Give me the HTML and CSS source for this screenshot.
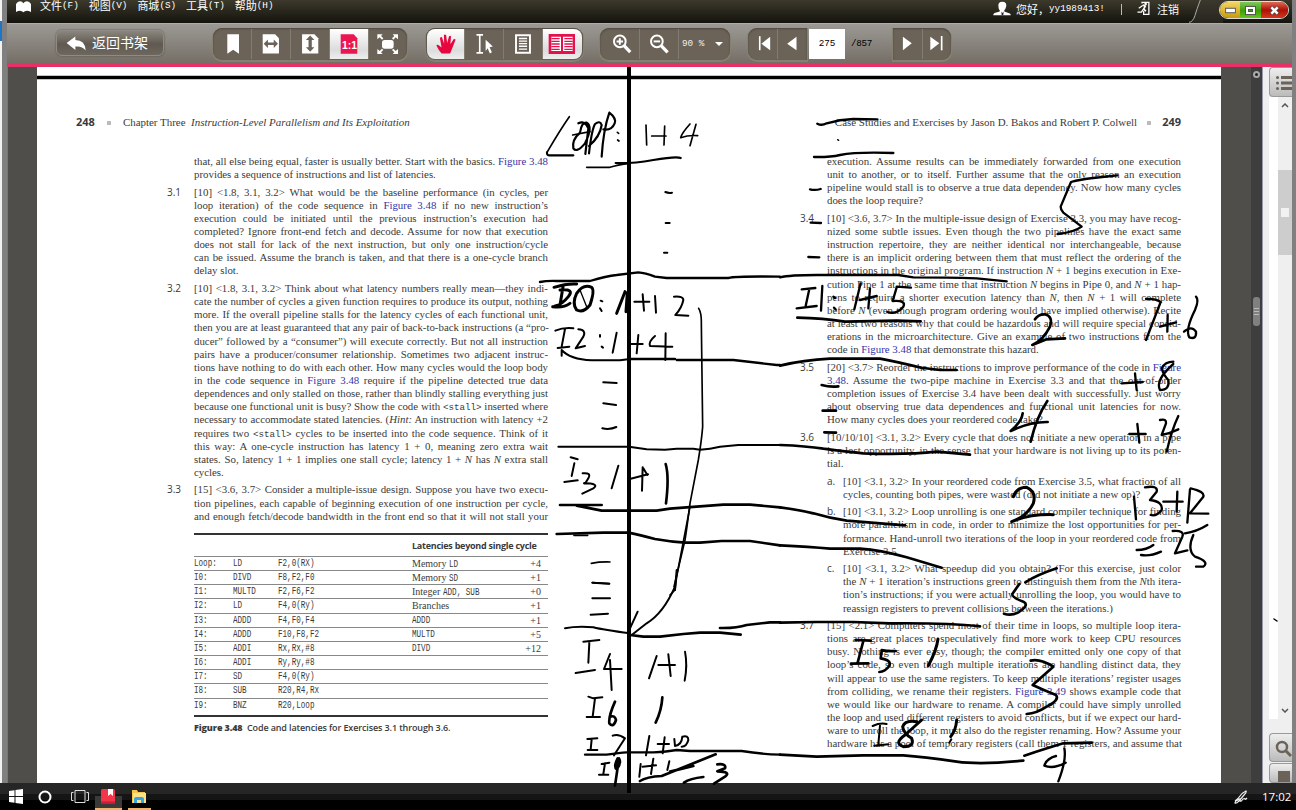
FILE: index.html
```html
<!DOCTYPE html>
<html lang="zh">
<head>
<meta charset="utf-8">
<title>Reader</title>
<link rel="stylesheet" href="styles.css">
</head>
<body>
<div class="screen">
<div class="edge-left"><span class="edge-blue"></span></div>
<div class="app">
<header class="titlebar">
  <svg class="book" viewBox="48 6 45 34"><path d="M48 38V14q5-8 12-8 7 0 10 6 4-6 11-6 7 0 12 8v24q-10-5-16-3-4 1-7 4-3-3-7-4-6-2-15 3z" fill="#fff"/></svg>
  <nav class="menu"><span>文件<i>(F)</i></span><span>视图<i>(V)</i></span><span>商城<i>(S)</i></span><span>工具<i>(T)</i></span><span>帮助<i>(H)</i></span></nav>
  <svg class="user" viewBox="386 4 54 46"><path d="M402 20q-2-14 12-14t12 14q-2 9-6 12v4l17 6q3 2 3 6h-54q0-5 4-7l16-5v-4q-4-4-4-12z" fill="#fff"/><path d="M411 36l3 5 4-5-1 12h-5z" fill="#222"/></svg>
  <span class="hello">您好，<span class="uname">yy1989413!</span></span>
  <span class="sep"></span>
  <svg class="exit" viewBox="818 4 42 46"><path d="M836 12V8h21v37h-16V35" fill="none" stroke="#fff" stroke-width="4"/><path d="M838 16l8 4-5 9 7 6" fill="none" stroke="#fff" stroke-width="5"/><path d="M838 18l-12 8M840 30l-6 8h-12" fill="none" stroke="#fff" stroke-width="4"/><circle cx="847" cy="13" r="4" fill="#fff"/></svg>
  <span class="logout">注销</span>
  <svg class="swoosh" viewBox="0 0 102 69"><path d="M0 67Q12 66 18 46T34 0H102V69H0z" fill="#3a382f" opacity=".5"/><path d="M0 67Q12 66 18 46T34 0" fill="none" stroke="#aaa" stroke-width="3"/></svg>
  <div class="winbtns">
    <span class="wb min"><svg viewBox="0 0 10 5"><rect x=".5" y=".5" width="9" height="4" fill="#fff" stroke="#666"/></svg></span>
    <span class="wb max"><svg viewBox="0 0 11 9"><rect x="2" y="2" width="7" height="5" fill="none" stroke="#555" stroke-width="4"/><rect x="2" y="2" width="7" height="5" fill="none" stroke="#fff" stroke-width="2"/></svg></span>
    <span class="wb close"><svg viewBox="0 0 11 10"><path d="M2 1.500l7 7M9 1.500l-7 7" stroke="#555" stroke-width="4"/><path d="M2 1.500l7 7M9 1.500l-7 7" stroke="#fff" stroke-width="2.500"/></svg></span>
  </div>
</header>
<div class="toolbar">
  <div class="back"><svg viewBox="195 103 62 45"><path d="M197 124l27-20v11q30 0 32 32-12-15-32-12v11z" fill="#fff"/></svg><span>返回书架</span></div>
  <div class="group g1">
    <svg class="cell c38" viewBox="642 84 114 90"><path d="M683 99h36v60l-18-12-18 12z" fill="#fff"/></svg>
    <svg class="cell c39" viewBox="756 84 117 90"><path d="M789 99h38l12 12v47h-50z" fill="#fff"/><path d="M792 128l13-13v9h18v-9l13 13-13 13v-9h-18v9z" fill="#6b6358"/></svg>
    <svg class="cell c39" viewBox="873 84 117 90"><path d="M907 99h38l12 12v47h-50z" fill="#fff"/><path d="M932 103l13 14h-8v22h8l-13 14-13-14h8v-22h-8z" fill="#6b6358"/></svg>
    <svg class="cell c39 on" viewBox="990 84 117 90"><path d="M1023 99h40l11 12v48h-51z" fill="#ea1650"/><text x="1027" y="145" class="one">1:1</text></svg>
    <svg class="cell c38" viewBox="1107 84 114 90"><rect x="1146" y="117" width="35" height="26" rx="8" fill="#fff"/><g fill="#fff"><path d="M1132 100h16l-5 5 7 7-4 4-7-7-7 6z"/><path d="M1194 100h-16l5 5-7 7 4 4 7-7 7 6z"/><path d="M1132 159h16l-5-5 7-7-4-4-7 7-7-6z"/><path d="M1194 159h-16l5-5-7-7 4-4 7 7 7-6z"/></g></svg>
  </div>
  <div class="group g2">
    <svg class="cell c38 on first" viewBox="80 84 114 90"><path d="M125 158q-10-10-16-24 3-6 8 0l8 6-5-28q1-7 6-4l7 20-1-26q3-5 7 0l3 24 6-21q4-4 6 1l-2 24 10-16q5-2 6 2l-12 31-5 11z" fill="#e8063f"/></svg>
    <svg class="cell c39" viewBox="194 84 116 90"><path d="M229 101h20M229 156h20M239 101v55" stroke="#fff" stroke-width="5"/><path d="M257 116l22 21-10 2 7 15-6 4-7-16-6 8z" fill="#fff"/></svg>
    <svg class="cell c39" viewBox="310 84 117 90"><path d="M344 99h49v60h-49z" fill="#fff"/><path d="M350 105h37v48h-37z" fill="#6b6358"/><path d="M356 112h25M356 120h25M356 128h25M356 136h25M356 145h25" stroke="#fff" stroke-width="4"/></svg>
    <svg class="cell c39 on last" viewBox="427 84 117 90"><path d="M444 99h79v60h-79z" fill="#e3124b"/><path d="M452 107h29v43h-29zM487 107h29v43h-29z" fill="#fff"/><path d="M452 113h25M452 121h25M452 129h25M452 137h25M452 145h25M491 113h25M491 121h25M491 129h25M491 137h25M491 145h25" stroke="#e3124b" stroke-width="4"/></svg>
  </div>
  <div class="group g3">
    <svg class="cell c39" viewBox="602 84 117 90"><circle cx="660" cy="121" r="18" fill="none" stroke="#fff" stroke-width="6"/><path d="M650 121h20M660 111v20" stroke="#fff" stroke-width="6"/><path d="M673 134l19 20" stroke="#fff" stroke-width="10"/></svg>
    <svg class="cell c39" viewBox="719 84 117 90"><circle cx="771" cy="121" r="18" fill="none" stroke="#fff" stroke-width="6"/><path d="M761 121h20" stroke="#fff" stroke-width="6"/><path d="M784 134l20 21" stroke="#fff" stroke-width="10"/></svg>
    <div class="pct"><span>90 %</span><i></i></div>
  </div>
  <div class="group g4">
    <svg class="cell c29" viewBox="1046 84 86 90"><path d="M1079 105v43" stroke="#fff" stroke-width="5"/><path d="M1111 107v41l-27-20z" fill="#fff"/></svg>
    <svg class="cell c29" viewBox="1132 84 86 90"><path d="M1187 107v41l-28-20z" fill="#fff"/></svg>
  </div>
  <div class="pageno">275</div><div class="total">/857</div>
  <div class="group g5">
    <svg class="cell c29" viewBox="87 84 85 90"><path d="M114 107v41l27-21z" fill="#fff"/></svg>
    <svg class="cell c29" viewBox="172 84 87 90"><path d="M194 107v41l27-21z" fill="#fff"/><path d="M228 105v43" stroke="#fff" stroke-width="5"/></svg>
  </div>
</div>
<main class="view">
  <div class="gutter"></div>
  <div class="spread">
    <section class="page left">
      <div class="runhead"><b>248</b><i class="sq"></i><span>Chapter Three&nbsp; <em>Instruction-Level Parallelism and Its Exploitation</em></span></div>
      <div class="para"><span class="num"></span><div class="txt"><p>that, all else being equal, faster is usually better. Start with the basics. <a>Figure 3.48</a></p><p>provides a sequence of instructions and list of latencies.</p></div></div>
      <div class="para"><span class="num">3.1</span><div class="txt"><p>[10] &lt;1.8, 3.1, 3.2&gt; What would be the baseline performance (in cycles, per</p><p>loop iteration) of the code sequence in <a>Figure 3.48</a> if no new instruction’s</p><p>execution could be initiated until the previous instruction’s execution had</p><p>completed? Ignore front-end fetch and decode. Assume for now that execution</p><p>does not stall for lack of the next instruction, but only one instruction/cycle</p><p>can be issued. Assume the branch is taken, and that there is a one-cycle branch</p><p>delay slot.</p></div></div>
      <div class="para"><span class="num">3.2</span><div class="txt"><p>[10] &lt;1.8, 3.1, 3.2&gt; Think about what latency numbers really mean—they indi-</p><p>cate the number of cycles a given function requires to produce its output, nothing</p><p>more. If the overall pipeline stalls for the latency cycles of each functional unit,</p><p>then you are at least guaranteed that any pair of back-to-back instructions (a “pro-</p><p>ducer” followed by a “consumer”) will execute correctly. But not all instruction</p><p>pairs have a producer/consumer relationship. Sometimes two adjacent instruc-</p><p>tions have nothing to do with each other. How many cycles would the loop body</p><p>in the code sequence in <a>Figure 3.48</a> require if the pipeline detected true data</p><p>dependences and only stalled on those, rather than blindly stalling everything just</p><p>because one functional unit is busy? Show the code with <code>&lt;stall&gt;</code> inserted where</p><p>necessary to accommodate stated latencies. (<em>Hint:</em> An instruction with latency +2</p><p>requires two <code>&lt;stall&gt;</code> cycles to be inserted into the code sequence. Think of it</p><p>this way: A one-cycle instruction has latency 1 + 0, meaning zero extra wait</p><p>states. So, latency 1 + 1 implies one stall cycle; latency 1 + <em>N</em> has <em>N</em> extra stall</p><p>cycles.</p></div></div>
      <div class="para"><span class="num">3.3</span><div class="txt open"><p>[15] &lt;3.6, 3.7&gt; Consider a multiple-issue design. Suppose you have two execu-</p><p>tion pipelines, each capable of beginning execution of one instruction per cycle,</p><p>and enough fetch/decode bandwidth in the front end so that it will not stall your</p></div></div>
      <div class="table">
        <div class="tr th"><span></span><span></span><span></span><b>Latencies beyond single cycle</b></div>
        <div class="tr"><kbd>Loop:</kbd><kbd>LD</kbd><kbd>F2,0(RX)</kbd><span>Memory <kbd>LD</kbd></span><span class="r">+4</span></div>
        <div class="tr"><kbd>I0:</kbd><kbd>DIVD</kbd><kbd>F8,F2,F0</kbd><span>Memory <kbd>SD</kbd></span><span class="r">+1</span></div>
        <div class="tr"><kbd>I1:</kbd><kbd>MULTD</kbd><kbd>F2,F6,F2</kbd><span>Integer <kbd>ADD, SUB</kbd></span><span class="r">+0</span></div>
        <div class="tr"><kbd>I2:</kbd><kbd>LD</kbd><kbd>F4,0(Ry)</kbd><span>Branches</span><span class="r">+1</span></div>
        <div class="tr"><kbd>I3:</kbd><kbd>ADDD</kbd><kbd>F4,F0,F4</kbd><kbd>ADDD</kbd><span class="r">+1</span></div>
        <div class="tr"><kbd>I4:</kbd><kbd>ADDD</kbd><kbd>F10,F8,F2</kbd><kbd>MULTD</kbd><span class="r">+5</span></div>
        <div class="tr"><kbd>I5:</kbd><kbd>ADDI</kbd><kbd>Rx,Rx,#8</kbd><kbd>DIVD</kbd><span class="r">+12</span></div>
        <div class="tr"><kbd>I6:</kbd><kbd>ADDI</kbd><kbd>Ry,Ry,#8</kbd></div>
        <div class="tr"><kbd>I7:</kbd><kbd>SD</kbd><kbd>F4,0(Ry)</kbd></div>
        <div class="tr"><kbd>I8:</kbd><kbd>SUB</kbd><kbd>R20,R4,Rx</kbd></div>
        <div class="tr"><kbd>I9:</kbd><kbd>BNZ</kbd><kbd>R20,Loop</kbd></div>
      </div>
      <div class="caption"><b>Figure 3.48</b>&nbsp; Code and latencies for Exercises 3.1 through 3.6.</div>
    </section>
    <section class="page right">
      <div class="runhead"><span>Case Studies and Exercises by Jason D. Bakos and Robert P. Colwell</span><i class="sq"></i><b>249</b></div>
      <div class="para"><span class="num"></span><div class="txt"><p>execution. Assume results can be immediately forwarded from one execution</p><p>unit to another, or to itself. Further assume that the only reason an execution</p><p>pipeline would stall is to observe a true data dependency. Now how many cycles</p><p>does the loop require?</p></div></div>
      <div class="para"><span class="num">3.4</span><div class="txt"><p>[10] &lt;3.6, 3.7&gt; In the multiple-issue design of Exercise 3.3, you may have recog-</p><p>nized some subtle issues. Even though the two pipelines have the exact same</p><p>instruction repertoire, they are neither identical nor interchangeable, because</p><p>there is an implicit ordering between them that must reflect the ordering of the</p><p>instructions in the original program. If instruction <em>N</em> + 1 begins execution in Exe-</p><p>cution Pipe 1 at the same time that instruction <em>N</em> begins in Pipe 0, and <em>N</em> + 1 hap-</p><p>pens to require a shorter execution latency than <em>N</em>, then <em>N</em> + 1 will complete</p><p>before <em>N</em> (even though program ordering would have implied otherwise). Recite</p><p>at least two reasons why that could be hazardous and will require special consid-</p><p>erations in the microarchitecture. Give an example of two instructions from the</p><p>code in <a>Figure 3.48</a> that demonstrate this hazard.</p></div></div>
      <div class="para"><span class="num">3.5</span><div class="txt"><p>[20] &lt;3.7&gt; Reorder the instructions to improve performance of the code in <a>Figure</a></p><p><a>3.48</a>. Assume the two-pipe machine in Exercise 3.3 and that the out-of-order</p><p>completion issues of Exercise 3.4 have been dealt with successfully. Just worry</p><p>about observing true data dependences and functional unit latencies for now.</p><p>How many cycles does your reordered code take?</p></div></div>
      <div class="para"><span class="num">3.6</span><div class="txt"><p>[10/10/10] &lt;3.1, 3.2&gt; Every cycle that does not initiate a new operation in a pipe</p><p>is a lost opportunity, in the sense that your hardware is not living up to its poten-</p><p>tial.</p></div></div>
      <div class="para sub"><span class="num">a.</span><div class="txt"><p>[10] &lt;3.1, 3.2&gt; In your reordered code from Exercise 3.5, what fraction of all</p><p>cycles, counting both pipes, were wasted (did not initiate a new op)?</p></div></div>
      <div class="para sub"><span class="num">b.</span><div class="txt"><p>[10] &lt;3.1, 3.2&gt; Loop unrolling is one standard compiler technique for finding</p><p>more parallelism in code, in order to minimize the lost opportunities for per-</p><p>formance. Hand-unroll two iterations of the loop in your reordered code from</p><p>Exercise 3.5.</p></div></div>
      <div class="para sub"><span class="num">c.</span><div class="txt"><p>[10] &lt;3.1, 3.2&gt; What speedup did you obtain? (For this exercise, just color</p><p>the <em>N</em> + 1 iteration’s instructions green to distinguish them from the <em>N</em>th itera-</p><p>tion’s instructions; if you were actually unrolling the loop, you would have to</p><p>reassign registers to prevent collisions between the iterations.)</p></div></div>
      <div class="para"><span class="num">3.7</span><div class="txt open"><p>[15] &lt;2.1&gt; Computers spend most of their time in loops, so multiple loop itera-</p><p>tions are great places to speculatively find more work to keep CPU resources</p><p>busy. Nothing is ever easy, though; the compiler emitted only one copy of that</p><p>loop’s code, so even though multiple iterations are handling distinct data, they</p><p>will appear to use the same registers. To keep multiple iterations’ register usages</p><p>from colliding, we rename their registers. <a>Figure 3.49</a> shows example code that</p><p>we would like our hardware to rename. A compiler could have simply unrolled</p><p>the loop and used different registers to avoid conflicts, but if we expect our hard-</p><p>ware to unroll the loop, it must also do the register renaming. How? Assume your</p><p>hardware has a pool of temporary registers (call them T registers, and assume that</p></div></div>
    </section>
  </div>
  <div class="gutter2"></div>
  <div class="scroll"><span class="dot"></span><span class="grip"><i></i><i></i><i></i></span></div>
  <div class="pane"></div>
  <div class="side">
    <div class="tab"><svg viewBox="0 0 16 16"><g fill="#6b6358"><circle cx="1.500" cy="2.500" r="1.500"/><circle cx="1.500" cy="8" r="1.500"/><circle cx="1.500" cy="13.500" r="1.500"/><path d="M5 1h11v3H5zM5 6.500h11v3H5zM5 12h11v3H5z"/></g></svg></div>
    <div class="sidebody"><div class="white"></div><div class="track"><svg viewBox="0 0 8 5"><path d="M1 4l3-3 3 3" fill="none" stroke="#555" stroke-width="1.500"/></svg><span class="thumb"><i></i></span><svg viewBox="0 0 8 5"><path d="M1 1l3 3 3-3" fill="none" stroke="#555" stroke-width="1.500"/></svg></div></div>
    <div class="tab b1"><svg viewBox="0 0 18 18"><circle cx="7" cy="7" r="5" fill="none" stroke="#6b6358" stroke-width="2.500"/><path d="M11 11l5 5" stroke="#6b6358" stroke-width="3"/></svg></div>
    <div class="tab b2"><svg viewBox="0 0 12 18"><path d="M0 0h12v18l-6-4-6 4z" fill="#6b6358"/></svg></div>
  </div>
</main>
</div>
<div class="edge-right"></div>
</div>
<footer class="taskbar">
  <svg class="t-start" viewBox="0 0 14 15"><path d="M0 2l5.500-.8V7H0zM6.500 1L14 0v7H6.500zM0 8h5.500v5.800L0 13zM6.500 8H14v7l-7.500-1z" fill="#fff"/></svg>
  <svg class="t-cir" viewBox="0 0 14 14"><circle cx="7" cy="7" r="5.500" fill="none" stroke="#fff" stroke-width="2"/></svg>
  <svg class="t-view" viewBox="0 0 18 13"><path d="M4 .5h10v12H4zM2.500 2.500h-2v8h2M15.500 2.500h2v8h-2" fill="none" stroke="#ddd"/></svg>
  <div class="t-app"><svg viewBox="0 0 14 15"><rect width="14" height="15" rx="1.500" fill="#f23548"/><path d="M0 12.500h14v1q0 1.500-1.500 1.500h-11Q0 15 0 13.500z" fill="#c81d33"/><path d="M7 0h5v7L9.500 5 7 7z" fill="#fff"/></svg></div>
  <div class="t-fold"><svg viewBox="0 0 14 14"><path d="M0 0h5l1 2h7v11H0z" fill="#f5c84c"/><path d="M1 3h13v10H1z" fill="#fde08c"/><path d="M2 13V9q0-2 2-2h6q2 0 2 2v4H9v-3H5v3z" fill="#35a7e0"/></svg></div>
  <svg class="t-pen" viewBox="0 0 14 14"><path d="M1 11q3-2 5-5t6-5q1 1-2 4L5 11q-3 3-4 2 0-2 3-3 3-3 2 1 1 1 3-2 2-1 2 0t2-1" fill="none" stroke="#eee" stroke-width="1.200"/></svg>
  <time>17:02</time>
</footer>
<svg class="ink" viewBox="0 0 1296 810">
  <g class="rule"><path d="M37 75.500H1221M37 79.500H1221" stroke="#c4c4c4" stroke-width="1"/>
  <path d="M37 77.500H1221" stroke-width="3"/><path d="M629 67V793" stroke-width="4"/></g>
  <g transform="translate(520 90) scale(.33333)">
    <path d="M148 80Q120 120 81 187M158 135L210 125M378 105L380 165M395 138H438M434 108L432 165M510 102Q485 130 482 143Q505 135 533 137M528 103L510 167M292 127l4 3M293 150l4 3M200 232H270Q290 225 330 220" stroke-width="5"/>
    <path d="M81 187Q80 197 90 196H160M175 100Q195 90 205 115L196 192M180 128Q155 150 160 175Q170 190 195 160Q220 110 200 98Q185 95 180 128M207 190Q215 120 225 102Q240 90 245 105Q240 140 207 168M268 68Q250 120 245 200M268 68Q290 85 284 100Q275 122 250 118M287 219Q330 222 400 210T482 204" stroke-width="6.500"/>
    <path d="M436 306q10 4 20 2M437 399h12M432 488h10" stroke-width="6"/>
    <path d="M60 576Q80 572 110 573H210Q260 558 290 555Q330 550 355 547Q375 548 405 560L440 564H625Q650 558 780 560" stroke-width="7"/>
    <path d="M102 592Q140 580 170 582M130 585L120 645M98 650Q130 655 150 640M120 600Q165 595 145 620T105 648M170 610Q155 640 170 660Q190 670 210 645Q225 600 215 592Q190 580 170 610M315 605L290 670M322 608L318 665" stroke-width="9"/>
    <path d="M180 600L200 650" stroke-width="4"/>
    <path d="M242 632l5 2M240 655l5 8M343 635H388M368 613L372 662M405 618L408 668M462 620Q490 618 490 630Q485 655 466 675L505 677M106 722Q130 712 160 715M135 717L125 770M113 774L148 770M175 718Q200 720 190 740L167 775L195 768M240 735v5M245 770l4 3M290 728L278 788M332 762H368M355 735L350 790M405 738Q385 755 390 768L457 770M437 730L436 810M125 797V780Q150 808 215 811H300L330 807" stroke-width="6"/>
    <path d="M330 807H465M470 810H640L770 825L780 825" stroke-width="7"/>
    <path d="M536 655Q545 670 544 700L548 1010Q545 1050 535 1110L510 1240Q500 1320 495 1350L462 1490" stroke-width="5"/>
  </g>
  <g transform="translate(520 350) scale(.33333)">
    <path d="M250 97L290 99M250 160L288 165M247 235Q270 240 289 231M115 290H327L380 298L435 299L470 296H520L540 299Q570 297 600 290L655 285H780M152 322L173 328M163 340L155 378M133 396L173 391M188 370Q215 367 205 385T192 400Q240 400 220 415L187 431M295 347L275 415M332 386L384 373M368 352L366 422M370 355L382 375" stroke-width="6"/>
    <path d="M437 342Q448 380 438 460M120 465H245M170 467L245 482H410L450 476L610 464H690L780 472M110 552L250 548H325Q360 555 405 567Q450 575 495 578H540L605 573H690L780 586" stroke-width="8"/>
    <path d="M162 556H203M214 640Q240 635 270 636M217 698L268 701M510 470L470 680L465 720L450 735" stroke-width="5"/>
  </g>
  <g transform="translate(520 570) scale(.33333)">
    <path d="M217 38L268 41M217 85H270M212 134L264 131M135 175Q170 168 220 172Q250 180 330 190M470 0L465 60M470 10L465 50Q430 130 380 160L335 195M353 125L330 175" stroke-width="6"/>
    <path d="M330 195L370 200H420L490 192L540 188H600L662 194M600 174Q650 175 680 165L750 157H780" stroke-width="8"/>
    <path d="M190 215L238 210M208 217L205 278M167 309L225 300M270 252L252 297H305M270 270L275 360M410 258L387 325M415 285H465M445 253L452 318M495 245Q503 285 494 332M205 380L220 385L247 382M225 385L218 440M200 441H240M202 507L232 505M215 508L212 538M203 540H232M278 497Q295 490 315 505L282 556M388 498L378 556M413 522H447M434 502L428 550M463 507L465 528Q485 525 487 500Q505 495 505 510Q500 530 485 530" stroke-width="6"/>
    <path d="M195 554H260Q300 548 320 547H400Q440 545 470 540L510 543H665Q720 552 780 554" stroke-width="7"/>
    <path d="M285 395Q265 440 268 460Q280 475 288 450Q285 435 270 440M427 382Q425 420 407 458M293 565Q280 590 290 598Q305 580 297 565L285 647M592 583Q620 580 615 595L592 604Q635 605 615 620L582 641M360 633Q380 620 425 618L587 553M450 605L520 588M492 638Q510 625 550 621" stroke-width="8"/>
    <path d="M245 582L268 578M255 580L250 612M237 614H265M362 582L358 620M368 590L408 586M400 566L393 612M448 574L442 600" stroke-width="6"/>
  </g>
  <g transform="translate(780 100) scale(.33333)">
    <path d="M112 71Q125 78 140 70Q180 58 220 57L292 58M102 171Q150 172 180 165Q230 155 340 159M90 268Q105 272 122 267M92 368L123 369M85 471L118 472M0 532Q30 525 110 525H355L400 532Q500 532 590 535L680 544" stroke-width="7"/>
    <path d="M1012 226L940 234Q900 238 873 246L842 320Q842 330 850 338L905 380Q880 398 833 402" stroke-width="7"/>
    <path d="M65 568L106 564M88 567L77 618M50 625L110 618M127 558L123 632M160 590l5 4M162 623q5 3 5 6M242 550L223 628M240 600L290 588M270 565L265 625M350 560L393 563M350 562L338 603Q380 600 370 620Q350 645 322 636" stroke-width="7"/>
    <path d="M173 119l3 2" stroke-width="4"/>
    <path d="M52 653Q130 655 195 665L350 662L422 664M0 797Q70 780 150 776H300Q350 785 430 805M765 658Q775 642 795 643Q820 650 810 680Q790 720 757 735L800 718L855 715" stroke-width="8"/>
    <path d="M1098 597Q1125 595 1142 606L1098 720M1140 680L1188 667M1163 645L1162 695M1248 590Q1258 600 1245 630Q1215 690 1228 712Q1250 720 1248 695Q1235 675 1212 695" stroke-width="7"/>
  </g>
  <g transform="translate(780 350) scale(.33333)">
    <path d="M430 54L480 60H530M125 105Q150 112 175 109M128 182H168M133 247L168 248" stroke-width="8"/>
    <path d="M1025 100L1088 96M1065 70L1070 120M1180 35Q1155 35 1145 55Q1150 75 1165 90Q1170 120 1140 120Q1125 90 1180 42M1048 252H1097M1072 222L1078 278M1140 210Q1160 205 1158 220L1145 255Q1170 250 1195 238M1195 198Q1175 240 1160 305" stroke-width="7"/>
    <path d="M728 190Q725 215 692 243Q750 215 803 216M802 153Q770 200 752 275" stroke-width="8"/>
    <path d="M0 285Q80 288 130 296Q200 305 250 310Q380 315 470 305L570 314M0 472Q60 480 100 490Q150 505 200 512L375 526M0 586Q90 590 150 596H240Q300 600 380 622L485 653" stroke-width="8"/>
    <path d="M700 440Q710 412 740 412Q770 425 760 460Q740 500 695 515Q750 492 820 494" stroke-width="9"/>
    <path d="M1062 440L1068 508M1095 412Q1135 405 1130 425L1110 450Q1150 455 1145 480Q1130 500 1112 495M1150 455H1208M1192 425L1190 485M1230 418L1222 518M1232 415Q1275 425 1270 440L1230 490L1285 491M1215 550Q1250 545 1282 525M1070 600Q1100 600 1120 585M1083 615Q1110 620 1143 605M1178 543Q1215 540 1207 560L1185 610L1222 601M1240 555Q1220 600 1245 620Q1290 635 1270 650H1248" stroke-width="7"/>
  </g>
  <g transform="translate(780 560) scale(.33333)">
    <path d="M830 25Q770 45 736 67M718 72L697 102Q695 112 730 125Q750 135 715 157Q695 168 672 161M0 188L110 186H220L330 190Q500 188 600 199" stroke-width="8"/>
    <path d="M227 240L272 242M250 243L233 308M213 311L265 310M305 270Q325 275 347 273M305 272L302 295Q335 300 328 318Q315 335 298 336" stroke-width="8"/>
    <path d="M474 237Q470 270 445 317M530 480Q528 510 512 530" stroke-width="9"/>
    <path d="M752 302Q780 295 820 320L758 375Q790 390 828 405Q840 420 800 440Q770 460 740 462" stroke-width="8"/>
    <path d="M278 498Q300 488 320 492M300 497L295 553M283 557L325 553M508 548l6-10" stroke-width="6"/>
    <path d="M410 485Q375 480 368 500Q370 520 395 535Q405 560 370 560Q340 550 375 525L425 480" stroke-width="9"/>
    <path d="M0 584L110 590L250 586H370Q430 590 530 605Q600 615 730 602M733 587Q800 565 850 550L935 548" stroke-width="8"/>
    <path d="M828 588Q800 595 793 617Q820 628 857 608M853 565Q860 600 835 664" stroke-width="7"/>
  </g>
  <path d="M1274 619l3 2" stroke-width="1.500"/>
</svg>
</body>
</html>
```

FILE: styles.css
```css
* { box-sizing: border-box; }
body { margin: 0; width: 1296px; height: 810px; overflow: hidden; position: relative; background: #000; display: flex; flex-direction: column; font-family: "Liberation Sans", "Noto Sans CJK SC", sans-serif; }
svg { display: block; flex: none; }
.screen { display: flex; height: 783px; overflow: hidden; }
.edge-left { width: 7px; background: #808080; border-left: 2px solid #f2f2f2; padding-top: 21px; }
.edge-blue { display: block; width: 2px; height: 20px; margin-left: -2px; background: #1e74c8; }
.edge-right { width: 4px; background: #808080; }
.app { width: 1285px; display: flex; flex-direction: column; }

.titlebar { height: 23px; display: flex; background: linear-gradient(#3c392c, #14130d); color: #fff; font: 11px/14px "Noto Sans CJK SC", sans-serif; }
.book { width: 15px; height: 12px; margin: 1px 0 0 9px; }
.menu { display: flex; margin-left: 9px; width: 953px; line-height: 11px; }
.menu span { width: 48.700px; height: 12px; white-space: nowrap; }
.menu i { font: 9.300px/11px "Liberation Mono", monospace; vertical-align: top; }
.user { width: 18px; height: 15px; margin-top: 1px; }
.hello { margin: 2px 0 0 5px; width: 105px; white-space: nowrap; }
.uname { font: 9.300px/14px "Liberation Mono", monospace; vertical-align: top; }
.sep { width: 1px; height: 11px; margin-top: 4px; background: #bbb; }
.exit { width: 14px; height: 15px; margin: 1px 0 0 14px; }
.logout { margin: 2px 0 0 7px; width: 32px; }
.swoosh { width: 34px; height: 23px; margin-right: -4px; }
.winbtns { display: flex; height: 18px; width: 70px; margin-top: 1px; border-radius: 9px; overflow: hidden; border: 1px solid #ddd; }
.wb { display: flex; align-items: center; justify-content: center; }
.wb svg { height: 9px; width: 11px; }
.min { width: 20px; background: linear-gradient(#f3d667, #c89a08); }
.max { width: 21px; background: linear-gradient(#7ec95a, #3f9d08 55%, #65c41c); }
.close { width: 27px; background: linear-gradient(#e06a55, #ad1104 50%, #d8351f); }

.toolbar { height: 44px; display: flex; align-items: flex-start; padding: 4px 0 0 49px; background: linear-gradient(#9c9995, #8a867f 45%, #746d65); border-bottom: 3px solid #e82f66; border-top: 1px solid #b0ada8; }
.back { width: 108px; height: 26px; margin-top: 2px; display: flex; align-items: center; padding-left: 9px; gap: 6px; border-radius: 6px; border: 1px solid #8f8b84; background: linear-gradient(#8a867e, #5f5951 55%, #6d675e); box-shadow: 0 0 2px #4d483f; color: #fff; font: 14px/20px "Noto Sans CJK SC", sans-serif; white-space: nowrap; }
.back svg { width: 20px; height: 15px; }
.back span { margin-top: -3px; }
.group { height: 32px; display: flex; padding: 1px; background: #6b6358; border-radius: 9px; box-shadow: 0 1px 0 1px #85806f, inset 0 1px 2px #4d463c; }
.g1 { width: 194px; margin-left: 49px; }
.g2 { width: 157px; margin-left: 19px; }
.g3 { width: 130px; margin-left: 17px; }
.g4 { width: 59px; margin-left: 18px; border-radius: 9px 0 0 9px; }
.g5 { width: 58px; margin-left: 21px; border-radius: 0 9px 9px 0; }
.cell { height: 30px; border-right: 1px solid #837c70; }
.cell:last-child { border-right: 0; }
.c38 { width: 38px; }
.c39 { width: 39px; }
.c29 { width: 29px; }
.on { background: linear-gradient(#fff, #dcdcdc 70%, #eee); }
.first { border-radius: 8px 0 0 8px; }
.last { border-radius: 0 8px 8px 0; }
.one { font: bold 32px "Liberation Sans", sans-serif; fill: #fff; }
.pct { display: flex; align-items: center; gap: 11px; padding-left: 3px; color: #eee; font: 9.300px/12px "Liberation Mono", monospace; white-space: nowrap; }
.pct i { border: 4px solid transparent; border-top-color: #fff; border-bottom: 0; }
.pageno { width: 36px; height: 30px; margin: 1px 0 0 2px; background: #fff; font: 9.300px/30px "Liberation Mono", monospace; text-align: center; }
.total { width: 27px; padding-left: 6px; font: 9.300px/32px "Liberation Mono", monospace; letter-spacing: -.3px; }

.view { height: 716px; display: flex; }
.gutter { width: 30px; background: #504e4b; border-left: 1px solid #777; }
.spread { width: 1184px; background: #fff; display: flex; font: 10.850px/13.150px "Liberation Serif", serif; color: #3a3a3a; }
.gutter2 { width: 30px; background: #504e4b; }
.scroll { width: 11px; background: #3e3e3e; display: flex; flex-direction: column; align-items: center; }
.dot { width: 7px; height: 7px; border-radius: 50%; border: 2px solid #aaa; background: #222; margin-top: 4px; }
.grip { width: 7px; height: 29px; margin-top: 219px; background: #808080; border-radius: 3px; display: flex; flex-direction: column; gap: 2px; padding: 11px 1px 0; }
.grip i { height: 1px; background: #bbb; }
.pane { width: 7px; background: #efeff1; border-left: 1px solid #99a; }
.side { width: 23px; background: #efefef; display: flex; flex-direction: column; }
.tab { height: 30px; border: 1px solid #999; border-right: 0; border-radius: 4px 0 0 4px; background: linear-gradient(#eee, #bbb); overflow: hidden; }
.tab svg { width: 16px; height: 16px; margin: 7px 0 0 6px; }
.sidebody { display: flex; height: 637px; }
.white { width: 9px; height: 622px; background: #fff; }
.track { width: 14px; display: flex; flex-direction: column; align-items: center; padding-top: 6px; }
.track svg { width: 8px; height: 5px; }
.thumb { width: 14px; height: 85px; margin: 62px 0 453px; background: #cdcdcd; padding: 38px 3px; }
.thumb i { display: block; height: 9px; background: #f2f2f2; }
.b1 { height: 29px; }
.b1 svg { width: 18px; height: 18px; margin: 6px 0 0 5px; }
.b2 { height: 20px; margin-top: 1px; }
.b2 svg { width: 12px; height: 18px; margin: 7px 0 0 8px; }

.page { padding-top: 48px; }
.left { width: 511px; padding-left: 39px; }
.right { width: 634px; }
.runhead { height: 40px; display: flex; align-items: flex-start; font-size: 10.950px; line-height: 14px; white-space: nowrap; }
.runhead b { font: bold 11px/14px "Open Sans", sans-serif; }
.sq { width: 4px; height: 4px; background: #bbb; margin: 6px 12px 0; }
.right .runhead { justify-content: flex-end; padding-right: 1px; }
.right .sq { margin: 6px 11px 0 10px; }
.para { display: flex; margin-bottom: 4.350px; }
.num { flex: none; font: 10px/13.150px "Open Sans", sans-serif; }
.left .num { width: 118px; padding-left: 91px; }
.right .num { width: 27px; }
.right .para { margin-left: 252px; }
.txt { width: 354px; flex: none; }
.txt p { margin: 0; height: 13.150px; white-space: nowrap; text-align: justify; text-align-last: justify; }
.txt p:last-child { text-align-last: left; }
.txt.open p:last-child { text-align-last: justify; }
.txt a { color: #3434a6; }
.txt code { font: 9.200px/10px "Liberation Mono", monospace; }
.right .sub .num { width: 43px; padding-left: 27px; }
.right .sub .txt { width: 338px; }

.table { margin: 10.500px 0 0 118px; width: 354px; border-top: 2px solid #333; border-bottom: 2px solid #333; padding-bottom: 2px; }
.tr { display: grid; grid-template-columns: 39px 44.500px 134.500px 110px 19px; height: 14.180px; line-height: 13px; border-bottom: 1px solid #888; white-space: nowrap; font-size: 10px; }
.tr:last-child { border: 0; }
.th { height: 21.500px; }
.th b { font: bold 9px/21px "Open Sans", sans-serif; letter-spacing: -.25px; }
.tr kbd { font: 10px/13px "Liberation Mono", monospace; transform: scaleX(.76); transform-origin: left; display: inline-block; width: 0; }
.tr .r { text-align: right; }
.caption { margin: 4px 0 0 118px; font: 600 9px/14px "Open Sans", sans-serif; letter-spacing: -.12px; white-space: nowrap; }

.taskbar { height: 27px; display: flex; background: linear-gradient(#262626 11px, #151515 11px, #151515 17px, #000 17px); padding-left: 9px; }
.t-start { width: 14px; height: 15px; margin-top: 6px; }
.t-cir { width: 14px; height: 14px; margin: 7px 0 0 15px; }
.t-view { width: 18px; height: 13px; margin: 7px 0 0 19px; }
.t-app { width: 27px; height: 27px; margin-left: 6px; padding: 6px 6px 0; border-bottom: 2px solid #f0b36a; background: linear-gradient(transparent 13px, #3a3a3a 13px); }
.t-app svg { width: 14px; height: 15px; }
.t-fold { width: 23px; height: 27px; margin-left: 6px; padding: 7px 4px 0; border-bottom: 2px solid #f0b36a; }
.t-fold svg { width: 14px; height: 14px; }
.t-pen { width: 14px; height: 14px; margin: 7px 14px 0 1083px; }
.taskbar time { color: #fff; font: 11.500px/27px "Open Sans", sans-serif; }
.ink { position: absolute; left: 0; top: 0; width: 1296px; height: 810px; fill: none; stroke: #000; stroke-linecap: round; stroke-linejoin: round; pointer-events: none; }
.rule { stroke-linecap: butt; }
```
